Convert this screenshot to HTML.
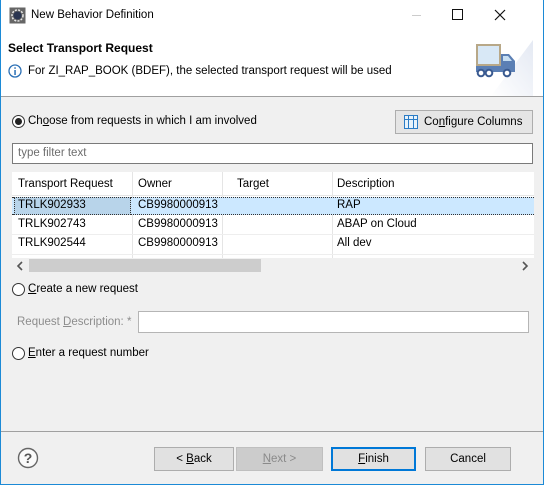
<!DOCTYPE html>
<html><head><meta charset="utf-8"><style>
*{box-sizing:border-box;margin:0;padding:0}
body{width:544px;height:485px;overflow:hidden;font-family:"Liberation Sans",sans-serif;font-size:11px;color:#000;background:#f0f0f0}
.win{position:absolute;left:0;top:0;width:544px;height:485px;border:1px solid #1c8ad6;border-top:none;background:#f0f0f0}
.a{position:absolute;white-space:nowrap}
.hdr{position:absolute;left:0;top:0;width:542px;height:97px;background:#fff;border-bottom:1px solid #a0a0a0}
.radio{position:absolute;width:13px;height:13px;border:1px solid #333;border-radius:50%;background:#fff}
.radio.on::after{content:"";position:absolute;left:2px;top:2px;width:7px;height:7px;border-radius:50%;background:#222}
.btn{position:absolute;height:24px;border:1px solid #adadad;background:#e1e1e1;text-align:center;line-height:22px;font-size:11.5px}
u{text-decoration:underline}
.cell{position:absolute;line-height:19px;font-size:11.5px}
</style></head><body><div class="win">
<div class="hdr">
<svg class="a" style="left:8px;top:7px" width="17" height="17" viewBox="0 0 17 17"><rect x="0.5" y="0.5" width="16" height="16" fill="#666"/><circle cx="8.5" cy="8.5" r="5.5" fill="none" stroke="#e8e8e8" stroke-width="1.5" stroke-dasharray="2 1.3"/><circle cx="8.5" cy="8.5" r="4" fill="#2a3550"/></svg>
<div class="a" style="left:30px;top:9px;font-size:11.5px">New Behavior Definition</div>
<div class="a" style="left:411px;top:15px;width:9px;height:1px;background:#ccc"></div>
<div class="a" style="left:451px;top:9px;width:11px;height:11px;border:1px solid #111"></div>
<svg class="a" style="left:493px;top:9px" width="12" height="12"><path d="M1 1L11 11M11 1L1 11" stroke="#111" stroke-width="1.2"/></svg>
<div class="a" style="left:7px;top:41px;font-weight:bold;font-size:12px">Select Transport Request</div>
<svg class="a" style="left:7px;top:64px" width="14" height="14"><circle cx="7" cy="7" r="6" fill="#fff" stroke="#2a6fb5" stroke-width="1.3"/><rect x="6.3" y="6" width="1.5" height="5" fill="#2a6fb5"/><rect x="6.3" y="3.3" width="1.5" height="1.5" fill="#2a6fb5"/></svg>
<div class="a" style="left:27px;top:65px;font-size:11.5px">For ZI_RAP_BOOK (BDEF), the selected transport request will be used</div>
<svg class="a" style="left:470px;top:40px" width="62" height="56"><defs><linearGradient id="g" x1="0" y1="1" x2="1" y2="0"><stop offset="0" stop-color="#fff"/><stop offset="1" stop-color="#e4e9f3"/></linearGradient></defs><path d="M20 56 L62 0 L62 56Z" fill="url(#g)"/><rect x="6" y="5" width="23" height="20" fill="#d8e8f6" stroke="#b8a888" stroke-width="2"/><path d="M5 26 H30 V14 H38 L44 21 V32 H5Z" fill="#5b7fb4"/><path d="M32 16 H37 L41 21 H32Z" fill="#c7dff3"/><circle cx="10" cy="33" r="3.3" fill="#fff" stroke="#3a5a90" stroke-width="2"/><circle cx="18" cy="33" r="3.3" fill="#fff" stroke="#3a5a90" stroke-width="2"/><circle cx="36" cy="33" r="3.3" fill="#fff" stroke="#3a5a90" stroke-width="2"/></svg>
</div>
<div class="radio on" style="left:11px;top:115px"></div>
<div class="a" style="left:27px;top:115px;font-size:11.5px">Ch<u>o</u>ose from requests in which I am involved</div>
<div class="btn" style="left:394px;top:110px;width:138px;background:#e5e5e5">
<svg style="position:absolute;left:8px;top:4px" width="14" height="14"><rect x="0.5" y="0.5" width="13" height="13" fill="#e8f3fb" stroke="#2b7cc6"/><path d="M4.5 1V13M9.5 1V13M1 4.5H13" stroke="#2b7cc6"/></svg>
<span style="position:absolute;left:28px;top:0">Co<u>n</u>figure Columns</span></div>
<div class="a" style="left:11px;top:143px;width:521px;height:21px;border:1px solid #7a7a7a;background:#fff;color:#6d6d6d;padding:3px 0 0 5px;font-size:11.5px">type filter text</div>
<div class="a" style="left:11px;top:172px;width:522px;height:102px;background:#fff">
<div class="a" style="left:0;top:0;width:522px;height:24px;border-bottom:1px solid #e5e5e5"></div>
<div class="a" style="left:120px;top:0;width:1px;height:86px;background:#e5e5e5"></div>
<div class="a" style="left:210px;top:0;width:1px;height:86px;background:#e5e5e5"></div>
<div class="a" style="left:320px;top:0;width:1px;height:86px;background:#e5e5e5"></div>
<div class="cell" style="left:6px;top:3px">Transport Request</div>
<div class="cell" style="left:126px;top:3px">Owner</div>
<div class="cell" style="left:225px;top:3px">Target</div>
<div class="cell" style="left:325px;top:3px">Description</div>
<div class="a" style="left:0;top:25px;width:522px;height:18px;background:#cce8ff;border-top:1px dotted #333;border-bottom:1px dotted #333"></div>
<div class="a" style="left:2px;top:25px;width:117px;height:18px;background:#b8d4ea;border:1px dotted #333"></div>
<div class="a" style="left:0;top:62px;width:522px;height:1px;background:#eee"></div>
<div class="a" style="left:0;top:82px;width:522px;height:1px;background:#eee"></div>
<div class="cell" style="left:6px;top:24px">TRLK902933</div><div class="cell" style="left:126px;top:24px">CB9980000913</div><div class="cell" style="left:325px;top:24px">RAP</div>
<div class="cell" style="left:6px;top:43px">TRLK902743</div><div class="cell" style="left:126px;top:43px">CB9980000913</div><div class="cell" style="left:325px;top:43px">ABAP on Cloud</div>
<div class="cell" style="left:6px;top:62px">TRLK902544</div><div class="cell" style="left:126px;top:62px">CB9980000913</div><div class="cell" style="left:325px;top:62px">All dev</div>
<div class="a" style="left:0;top:86px;width:522px;height:16px;background:#f0f0f0"></div>
<div class="a" style="left:17px;top:87px;width:232px;height:13px;background:#cdcdcd"></div>
<svg class="a" style="left:4px;top:89px" width="8" height="10"><path d="M6 1L2 5L6 9" fill="none" stroke="#555" stroke-width="1.6"/></svg>
<svg class="a" style="left:509px;top:89px" width="8" height="10"><path d="M2 1L6 5L2 9" fill="none" stroke="#555" stroke-width="1.6"/></svg>
</div>
<div class="radio" style="left:11px;top:283px"></div>
<div class="a" style="left:27px;top:283px;font-size:11.5px"><u>C</u>reate a new request</div>
<div class="a" style="left:16px;top:316px;color:#8d8d8d;font-size:11.5px">Request <u>D</u>escription: *</div>
<div class="a" style="left:137px;top:311px;width:391px;height:22px;border:1px solid #b5b5b5;background:#fff"></div>
<div class="radio" style="left:11px;top:347px"></div>
<div class="a" style="left:27px;top:347px;font-size:11.5px"><u>E</u>nter a request number</div>
<div class="a" style="left:0;top:431px;width:542px;height:1px;background:#a0a0a0"></div>
<svg class="a" style="left:16px;top:447px" width="22" height="22"><circle cx="11" cy="11" r="9.5" fill="#fafafa" stroke="#666" stroke-width="1.4"/><text x="11" y="16" font-family="Liberation Sans" font-size="14" font-weight="bold" text-anchor="middle" fill="#555">?</text></svg>
<div class="btn" style="left:153px;top:447px;width:80px">&lt; <u>B</u>ack</div>
<div class="btn" style="left:235px;top:447px;width:87px;background:#cccccc;border-color:#bfbfbf;color:#8a8a8a"><u>N</u>ext &gt;</div>
<div class="btn" style="left:330px;top:447px;width:85px;border:2px solid #0078d7;line-height:20px"><u>F</u>inish</div>
<div class="btn" style="left:424px;top:447px;width:86px">Cancel</div>
</div></body></html>
